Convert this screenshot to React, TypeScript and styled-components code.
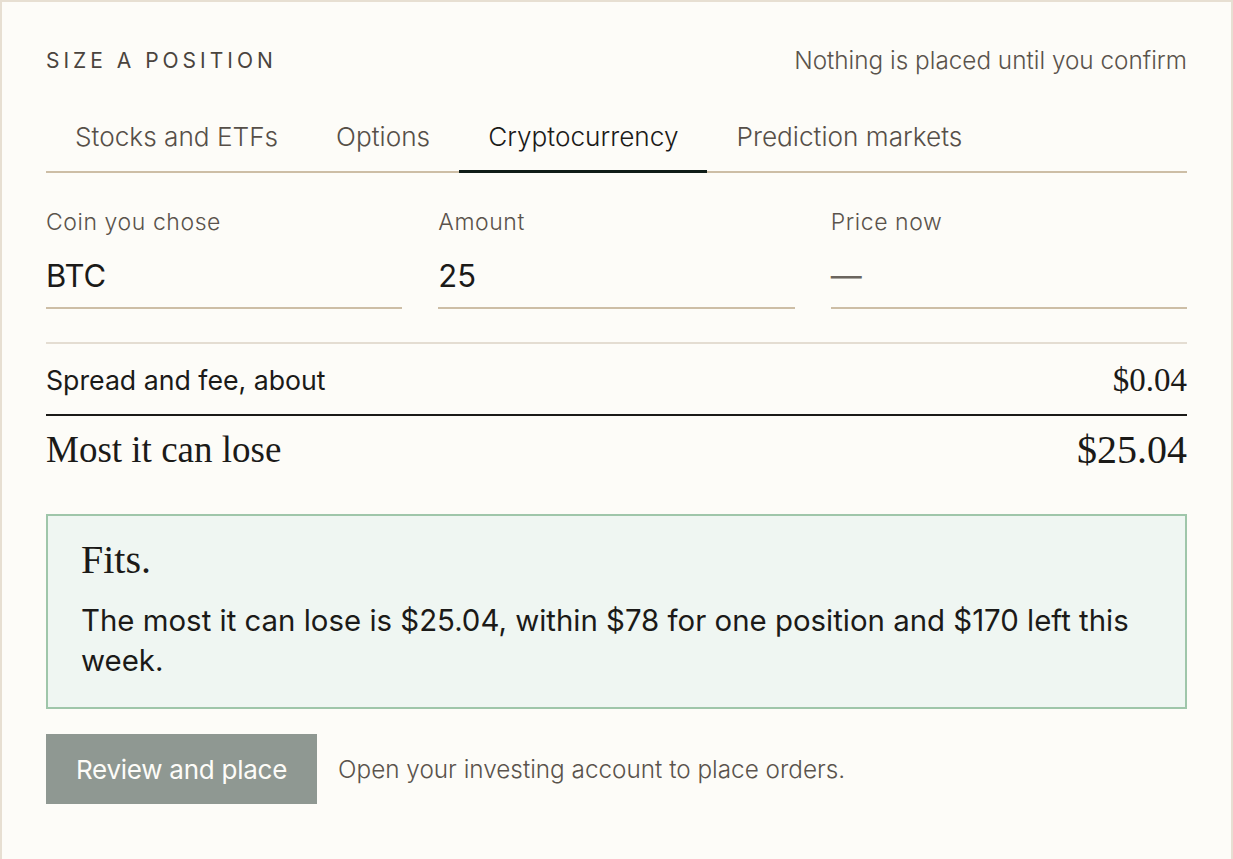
import React from "react";
import styled, { createGlobalStyle } from "styled-components";

const GlobalStyle = createGlobalStyle`
  html, body { margin: 0; padding: 0; background: #fdfcf8; }
  body { font-family: Inter, "Noto Sans", sans-serif; color: #1b1a18; }
  * { box-sizing: border-box; }
`;

const Card = styled.section`
  min-height: 100vh;
  border: 2px solid #e7dfd2;
  border-bottom: none;
  background: #fdfcf8;
  padding: 44px 44px 40px;
  display: flex;
  flex-direction: column;
`;

const Header = styled.header`
  display: flex;
  justify-content: space-between;
  align-items: center;
  height: 28px;
`;

const Eyebrow = styled.h2`
  margin: 0;
  font-size: 21px;
  font-weight: 400;
  letter-spacing: 0.19em;
  color: #4a443e;
  text-transform: uppercase;
`;

const Note = styled.p`
  margin: 0;
  font-size: 24.3px;
  font-weight: 300;
  color: #5a534c;
`;

const Tabs = styled.nav`
  display: flex;
  margin-top: 31px;
  border-bottom: 2px solid #cdbea6;
`;

const Tab = styled.button<{ $active?: boolean }>`
  appearance: none;
  background: none;
  border: none;
  border-bottom: 3px solid ${(p) => (p.$active ? "#0f1d18" : "transparent")};
  margin-bottom: -2px;
  padding: 16px 29px 17px;
  font-family: inherit;
  font-size: 26.2px;
  line-height: 32px;
  font-weight: 300;
  color: ${(p) => (p.$active ? "#1b1a18" : "#564f48")};
  cursor: pointer;
`;

const Fields = styled.div`
  display: grid;
  grid-template-columns: repeat(3, 1fr);
  gap: 36px;
  margin-top: 34px;
`;

const Field = styled.label`
  display: flex;
  flex-direction: column;
  border-bottom: 2px solid #cdbea6;
  padding-bottom: 13px;
`;

const FieldLabel = styled.span`
  font-size: 23px;
  line-height: 30px;
  font-weight: 300;
  color: #5a534c;
  letter-spacing: 0.025em;
`;

const FieldValue = styled.span<{ $muted?: boolean }>`
  margin-top: 21px;
  font-size: 31px;
  line-height: 36px;
  font-weight: 400;
  color: ${(p) => (p.$muted ? "#6b655e" : "#1b1a18")};
`;

const Summary = styled.div`
  margin-top: 33px;
  border-top: 2px solid #e4ddd2;
`;

const Row = styled.div<{ $total?: boolean }>`
  display: flex;
  justify-content: space-between;
  align-items: center;
  padding: ${(p) => (p.$total ? "12px 0 0" : "20px 0 18px")};
  border-bottom: ${(p) => (p.$total ? "none" : "2px solid #1b1a18")};
`;

const RowLabel = styled.span`
  font-size: 26.7px;
  line-height: 32px;
  font-weight: 400;
  color: #1b1a18;
`;

const RowValue = styled.span`
  font-family: "Liberation Serif", "DejaVu Serif", serif;
  font-size: 33px;
  line-height: 32px;
  color: #1b1a18;
`;

const TotalLabel = styled.span`
  font-family: "Liberation Serif", "DejaVu Serif", serif;
  font-size: 37px;
  line-height: 44px;
  color: #1b1a18;
`;

const TotalValue = styled.span`
  font-family: "Liberation Serif", "DejaVu Serif", serif;
  font-size: 40px;
  line-height: 44px;
  color: #1b1a18;
`;

const Verdict = styled.div`
  margin-top: 42px;
  border: 2px solid #9fc6aa;
  background: #eff6f2;
  padding: 22px 33px 26px;
`;

const VerdictTitle = styled.h3`
  margin: 0;
  font-family: "Liberation Serif", "DejaVu Serif", serif;
  font-weight: 400;
  font-size: 40px;
  line-height: 44px;
  color: #1b1a18;
`;

const VerdictText = styled.p`
  margin: 19px 0 0;
  font-size: 29.4px;
  line-height: 40px;
  font-weight: 400;
  color: #1b1a18;
`;

const Actions = styled.div`
  display: flex;
  align-items: center;
  gap: 21px;
  margin-top: 25px;
`;

const PrimaryButton = styled.button`
  appearance: none;
  border: none;
  background: #8f9892;
  color: #fdfcf8;
  font-family: inherit;
  font-size: 26px;
  font-weight: 400;
  letter-spacing: -0.01em;
  height: 70px;
  padding: 0 30px;
  cursor: not-allowed;
`;

const Hint = styled.span`
  font-size: 24.3px;
  font-weight: 300;
  color: #5a534c;
`;

const tabs = ["Stocks and ETFs", "Options", "Cryptocurrency", "Prediction markets"];

export default function App() {
  return (
    <>
      <GlobalStyle />
      <Card>
        <Header>
          <Eyebrow>Size a position</Eyebrow>
          <Note>Nothing is placed until you confirm</Note>
        </Header>
        <Tabs>
          {tabs.map((t) => (
            <Tab key={t} $active={t === "Cryptocurrency"}>
              {t}
            </Tab>
          ))}
        </Tabs>
        <Fields>
          <Field>
            <FieldLabel>Coin you chose</FieldLabel>
            <FieldValue>BTC</FieldValue>
          </Field>
          <Field>
            <FieldLabel>Amount</FieldLabel>
            <FieldValue>25</FieldValue>
          </Field>
          <Field>
            <FieldLabel>Price now</FieldLabel>
            <FieldValue $muted>—</FieldValue>
          </Field>
        </Fields>
        <Summary>
          <Row>
            <RowLabel>Spread and fee, about</RowLabel>
            <RowValue>$0.04</RowValue>
          </Row>
          <Row $total>
            <TotalLabel>Most it can lose</TotalLabel>
            <TotalValue>$25.04</TotalValue>
          </Row>
        </Summary>
        <Verdict>
          <VerdictTitle>Fits.</VerdictTitle>
          <VerdictText>
            The most it can lose is $25.04, within $78 for one position and $170 left this week.
          </VerdictText>
        </Verdict>
        <Actions>
          <PrimaryButton>Review and place</PrimaryButton>
          <Hint>Open your investing account to place orders.</Hint>
        </Actions>
      </Card>
    </>
  );
}
